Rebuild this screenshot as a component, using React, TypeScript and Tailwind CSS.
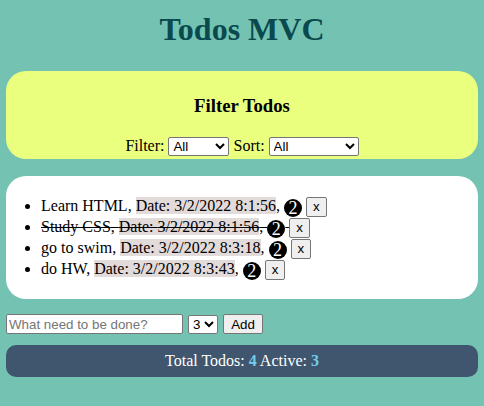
import React from "react";

const serif = { fontFamily: '"Liberation Serif", "Times New Roman", serif' };

function Badge() {
  return (
    <span className="inline-block w-[18px] h-[18px] rounded-full bg-black text-white text-center leading-[18px] text-[18px] align-[-3px]">
      2
    </span>
  );
}

function XBtn() {
  return (
    <button className="inline-block border border-[#767676] rounded-[2px] bg-[#efefef] px-[6px] py-[1px] text-[13.33px] leading-[16px] text-black align-baseline [font-family:'Liberation_Sans',Arial,sans-serif]">
      x
    </button>
  );
}

const todos = [
  { t: "Learn HTML", d: "3/2/2022 8:1:56", done: false },
  { t: "Study CSS", d: "3/2/2022 8:1:56", done: true },
  { t: "go to swim", d: "3/2/2022 8:3:18", done: false },
  { t: "do HW", d: "3/2/2022 8:3:43", done: false },
];

export default function App() {
  return (
    <div className="w-[484px] h-[406px] bg-[#74c3b2] px-[6px] text-black text-[16px] overflow-hidden" style={serif}>
      <h1 className="text-center font-bold text-[32px] leading-[37px] text-[#0a4a4e] pt-[11px] pb-[23px]">Todos MVC</h1>
      <div className="bg-[#ebff7f] rounded-[20px] pt-[24px] pb-[1px] text-center">
        <h3 className="font-bold text-[18.72px] leading-[22px] mb-[17px]">Filter Todos</h3>
        <div className="flex items-center justify-center gap-[4px]">
          <span>Filter:</span>
          <select className="w-[61px] h-[19px] border border-[#767676] rounded-[2px] bg-white text-[13.33px] text-black [font-family:'Liberation_Sans',Arial,sans-serif]">
            <option>All</option>
          </select>
          <span>Sort:</span>
          <select className="w-[90px] h-[19px] border border-[#767676] rounded-[2px] bg-white text-[13.33px] text-black [font-family:'Liberation_Sans',Arial,sans-serif]">
            <option>All</option>
          </select>
        </div>
      </div>
      <div className="bg-white rounded-[20px] mt-[17px] pt-[19px] pb-[20px] pl-[35px]">
        <ul className="list-disc list-outside">
          {todos.map((td, i) => (
            <li key={i} className={"leading-[21px] h-[21px] " + (td.done ? "line-through" : "")}>
              {td.t}, <span className="bg-[#e3dada]">Date: {td.d}</span>, <Badge /> <XBtn />
            </li>
          ))}
        </ul>
      </div>
      <div className="flex items-center gap-[5px] mt-[15px] [font-family:'Liberation_Sans',Arial,sans-serif] text-[13.33px]">
        <input
          className="w-[177px] h-[20px] border border-[#767676] rounded-[2px] bg-white px-[2px] placeholder:text-[#757575] text-[13.33px]"
          placeholder="What need to be done?"
        />
        <select className="w-[30px] h-[19px] border border-[#767676] rounded-[2px] bg-white text-[13.33px]">
          <option>3</option>
        </select>
        <button className="w-[40px] h-[20px] border border-[#767676] rounded-[2px] bg-[#efefef] text-[13.33px]">Add</button>
      </div>
      <div className="mt-[11px] h-[32px] bg-[#3f566e] rounded-[10px] flex items-center justify-center text-white text-[16px]">
        <span>
          Total Todos: <b className="text-[#72cdf0]">4</b> Active: <b className="text-[#72cdf0]">3</b>
        </span>
      </div>
    </div>
  );
}
